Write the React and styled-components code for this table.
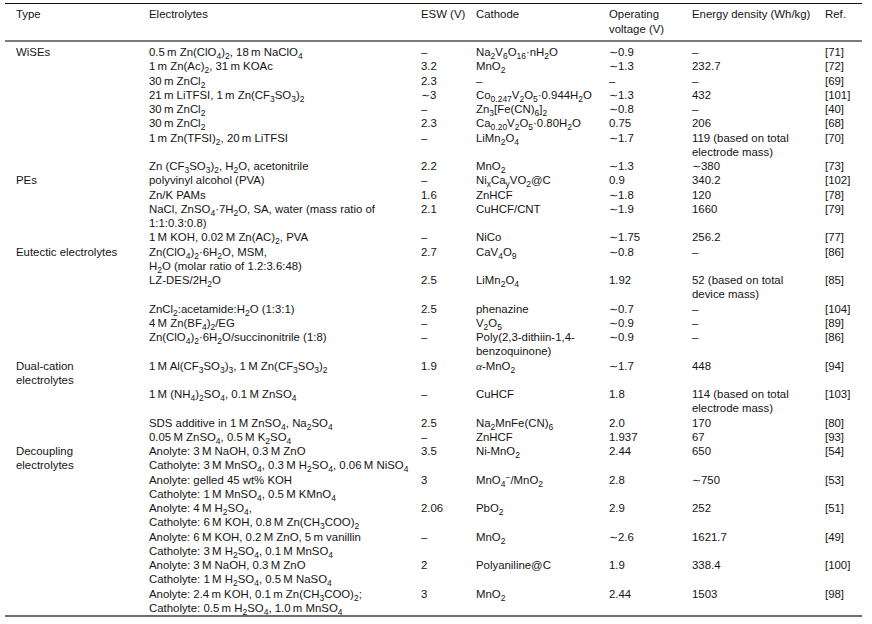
import React from 'react';
import styled, { createGlobalStyle } from 'styled-components';

const GlobalStyle = createGlobalStyle`
  html, body {
    margin: 0;
    padding: 0;
    background: #fff;
  }
`;

const Page = styled.div`
  width: 872px;
  height: 624px;
  padding-top: 3px;
  box-sizing: border-box;
  background: #fff;
  font-family: 'Liberation Sans', Arial, sans-serif;
  font-size: 11.4px;
  color: #141414;
  overflow: hidden;
`;

const Table = styled.table`
  margin-left: 5px;
  width: 857px;
  table-layout: fixed;
  border-collapse: separate;
  border-spacing: 0;
`;

const HeadCell = styled.th`
  font-weight: normal;
  text-align: left;
  vertical-align: top;
  white-space: nowrap;
  line-height: 14.5px;
  padding: 3px 0 4px ${(p) => (p.$first ? '11px' : '0')};
  border-top: 1px solid #111;
  border-bottom: 2px solid #7c7c7c;
`;

const Cell = styled.td`
  vertical-align: top;
  white-space: nowrap;
  line-height: 14.25px;
  padding: ${(p) => (p.$top ? '3px' : '0')} 0 0 ${(p) => (p.$first ? '11px' : '0')};
  border-bottom: ${(p) => (p.$last ? '2px solid #6e6e6e' : 'none')};
`;

const Sub = styled.sub`
  font-size: 8.5px;
  line-height: 0;
  vertical-align: -3px;
`;

const Sup = styled.sup`
  font-size: 8.5px;
  line-height: 0;
  vertical-align: 4px;
`;

const Greek = styled.i`
  font-family: 'Liberation Serif', serif;
`;

function chem(text) {
  const src = text.replace(/(\d) ([mM]) /g, '$1\u2009$2 ');
  const out = [];
  let buf = '';
  let key = 0;
  let i = 0;
  const flush = () => {
    if (buf) {
      out.push(buf);
      buf = '';
    }
  };
  while (i < src.length) {
    const c = src[i];
    if ((c === '_' || c === '^') && src[i + 1] === '{') {
      const end = src.indexOf('}', i);
      const inner = src.slice(i + 2, end);
      flush();
      out.push(c === '_' ? <Sub key={key++}>{inner}</Sub> : <Sup key={key++}>{inner}</Sup>);
      i = end + 1;
    } else if (c === '\n') {
      flush();
      out.push(<br key={key++} />);
      i += 1;
    } else if (c === 'α') {
      flush();
      out.push(<Greek key={key++}>α</Greek>);
      i += 1;
    } else {
      buf += c;
      i += 1;
    }
  }
  flush();
  return out;
}

const widths = [144, 272, 55, 133, 83, 133, 37];

const headers = [
  'Type',
  'Electrolytes',
  'ESW (V)',
  'Cathode',
  'Operating\nvoltage (V)',
  'Energy density (Wh/kg)',
  'Ref.',
];

const rows = [
  ['WiSEs', '0.5 m Zn(ClO_{4})_{2}, 18 m NaClO_{4}', '–', 'Na_{2}V_{6}O_{16}·nH_{2}O', '∼0.9', '–', '[71]'],
  ['', '1 m Zn(Ac)_{2}, 31 m KOAc', '3.2', 'MnO_{2}', '∼1.3', '232.7', '[72]'],
  ['', '30 m ZnCl_{2}', '2.3', '–', '–', '–', '[69]'],
  ['', '21 m LiTFSI, 1 m Zn(CF_{3}SO_{3})_{2}', '∼3', 'Co_{0.247}V_{2}O_{5}·0.944H_{2}O', '∼1.3', '432', '[101]'],
  ['', '30 m ZnCl_{2}', '–', 'Zn_{3}[Fe(CN)_{6}]_{2}', '∼0.8', '–', '[40]'],
  ['', '30 m ZnCl_{2}', '2.3', 'Ca_{0.20}V_{2}O_{5}·0.80H_{2}O', '0.75', '206', '[68]'],
  ['', '1 m Zn(TFSI)_{2}, 20 m LiTFSI', '–', 'LiMn_{2}O_{4}', '∼1.7', '119 (based on total\nelectrode mass)', '[70]'],
  ['', 'Zn (CF_{3}SO_{3})_{2}, H_{2}O, acetonitrile', '2.2', 'MnO_{2}', '∼1.3', '∼380', '[73]'],
  ['PEs', 'polyvinyl alcohol (PVA)', '–', 'Ni_{x}Ca_{y}VO_{2}@C', '0.9', '340.2', '[102]'],
  ['', 'Zn/K PAMs', '1.6', 'ZnHCF', '∼1.8', '120', '[78]'],
  ['', 'NaCl, ZnSO_{4}·7H_{2}O, SA, water (mass ratio of\n1:1:0.3:0.8)', '2.1', 'CuHCF/CNT', '∼1.9', '1660', '[79]'],
  ['', '1 M KOH, 0.02 M Zn(AC)_{2}, PVA', '–', 'NiCo', '∼1.75', '256.2', '[77]'],
  ['Eutectic electrolytes', 'Zn(ClO_{4})_{2}·6H_{2}O, MSM,\nH_{2}O (molar ratio of 1.2:3.6:48)', '2.7', 'CaV_{4}O_{9}', '∼0.8', '–', '[86]'],
  ['', 'LZ-DES/2H_{2}O', '2.5', 'LiMn_{2}O_{4}', '1.92', '52 (based on total\ndevice mass)', '[85]'],
  ['', 'ZnCl_{2}:acetamide:H_{2}O (1:3:1)', '2.5', 'phenazine', '∼0.7', '–', '[104]'],
  ['', '4 M Zn(BF_{4})_{2}/EG', '–', 'V_{2}O_{5}', '∼0.9', '–', '[89]'],
  ['', 'Zn(ClO_{4})_{2}·6H_{2}O/succinonitrile (1:8)', '–', 'Poly(2,3-dithiin-1,4-\nbenzoquinone)', '∼0.9', '–', '[86]'],
  ['Dual-cation\nelectrolytes', '1 M Al(CF_{3}SO_{3})_{3}, 1 M Zn(CF_{3}SO_{3})_{2}', '1.9', 'α-MnO_{2}', '∼1.7', '448', '[94]'],
  ['', '1 M (NH_{4})_{2}SO_{4}, 0.1 M ZnSO_{4}', '–', 'CuHCF', '1.8', '114 (based on total\nelectrode mass)', '[103]'],
  ['', 'SDS additive in 1 M ZnSO_{4}, Na_{2}SO_{4}', '2.5', 'Na_{2}MnFe(CN)_{6}', '2.0', '170', '[80]'],
  ['', '0.05 M ZnSO_{4}, 0.5 M K_{2}SO_{4}', '–', 'ZnHCF', '1.937', '67', '[93]'],
  ['Decoupling\nelectrolytes', 'Anolyte: 3 M NaOH, 0.3 M ZnO\nCatholyte: 3 M MnSO_{4}, 0.3 M H_{2}SO_{4}, 0.06 M NiSO_{4}', '3.5', 'Ni-MnO_{2}', '2.44', '650', '[54]'],
  ['', 'Anolyte: gelled 45 wt% KOH\nCatholyte: 1 M MnSO_{4}, 0.5 M KMnO_{4}', '3', 'MnO_{4}^{−}/MnO_{2}', '2.8', '∼750', '[53]'],
  ['', 'Anolyte: 4 M H_{2}SO_{4},\nCatholyte: 6 M KOH, 0.8 M Zn(CH_{3}COO)_{2}', '2.06', 'PbO_{2}', '2.9', '252', '[51]'],
  ['', 'Anolyte: 6 M KOH, 0.2 M ZnO, 5 m vanillin\nCatholyte: 3 M H_{2}SO_{4}, 0.1 M MnSO_{4}', '–', 'MnO_{2}', '∼2.6', '1621.7', '[49]'],
  ['', 'Anolyte: 3 M NaOH, 0.3 M ZnO\nCatholyte: 1 M H_{2}SO_{4}, 0.5 M NaSO_{4}', '2', 'Polyaniline@C', '1.9', '338.4', '[100]'],
  ['', 'Anolyte: 2.4 m KOH, 0.1 m Zn(CH_{3}COO)_{2};\nCatholyte: 0.5 m H_{2}SO_{4}, 1.0 m MnSO_{4}', '3', 'MnO_{2}', '2.44', '1503', '[98]'],
];

export default function App() {
  return (
    <Page>
      <GlobalStyle />
      <Table>
        <colgroup>
          {widths.map((w, i) => (
            <col key={i} style={{ width: w }} />
          ))}
        </colgroup>
        <thead>
          <tr>
            {headers.map((h, i) => (
              <HeadCell key={i} $first={i === 0}>
                {chem(h)}
              </HeadCell>
            ))}
          </tr>
        </thead>
        <tbody>
          {rows.map((row, r) => (
            <tr key={r}>
              {row.map((cell, c) => (
                <Cell
                  key={c}
                  $first={c === 0}
                  $top={r === 0}
                  $last={r === rows.length - 1}
                >
                  {chem(cell)}
                </Cell>
              ))}
            </tr>
          ))}
        </tbody>
      </Table>
    </Page>
  );
}
